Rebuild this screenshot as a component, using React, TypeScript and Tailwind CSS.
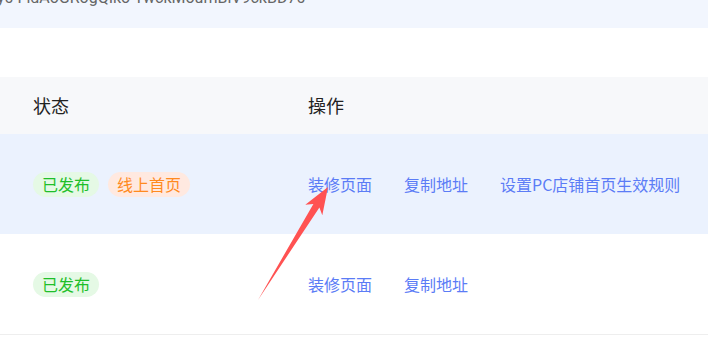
import React from "react";

const font = { fontFamily: '"Noto Sans CJK SC", "Noto Sans", sans-serif' };

function Tag({ children, tone }: { children: React.ReactNode; tone: "green" | "orange" }) {
  const cls =
    tone === "green"
      ? "bg-[#e5f9e5] text-[#1fbf2a]"
      : "bg-[#ffe9e0] text-[#ff8a1f]";
  return (
    <span className={`inline-flex h-[25px] items-center rounded-full px-[9px] text-[16px] leading-none ${cls}`}>
      {children}
    </span>
  );
}

function Link({ children }: { children: React.ReactNode }) {
  return <a className="cursor-pointer text-[16px] leading-none text-[#5b7cf6]">{children}</a>;
}

export default function App() {
  return (
    <div className="relative h-[346px] w-[708px] overflow-hidden bg-white" style={font}>
      <div className="h-[28px] overflow-hidden bg-[#f2f6fe]">
        <div
          className="-ml-[3px] -mt-[12px] whitespace-nowrap text-[16px] leading-[20px] text-[#666]"
          style={{ fontFamily: "Roboto, sans-serif" }}
        >
          y0 FldAoGRogQIko TwckMoumBlV9ckBD70
        </div>
      </div>

      <div className="h-[49px]" />

      <div className="flex h-[57px] items-center bg-[#f7f8fa] text-[18px] text-[#222]">
        <div className="w-[308px] pl-[33px]">状态</div>
        <div>操作</div>
      </div>

      <div className="flex h-[100px] items-center bg-[#ebf2fe]">
        <div className="flex w-[308px] gap-[9px] pl-[33px]">
          <Tag tone="green">已发布</Tag>
          <Tag tone="orange">线上首页</Tag>
        </div>
        <div className="flex gap-[32px]">
          <Link>装修页面</Link>
          <Link>复制地址</Link>
          <Link>设置PC店铺首页生效规则</Link>
        </div>
      </div>

      <div className="flex h-[101px] items-center border-b border-[#eeeeee]">
        <div className="flex w-[308px] pl-[33px]">
          <Tag tone="green">已发布</Tag>
        </div>
        <div className="flex gap-[32px]">
          <Link>装修页面</Link>
          <Link>复制地址</Link>
        </div>
      </div>

      <svg className="pointer-events-none absolute left-0 top-0" width="708" height="346">
        <polygon
          points="328,187 305.3,204.7 313.4,203.9 258,300 319.4,207.5 322.3,215.3"
          fill="#ff5252"
        />
      </svg>
    </div>
  );
}
